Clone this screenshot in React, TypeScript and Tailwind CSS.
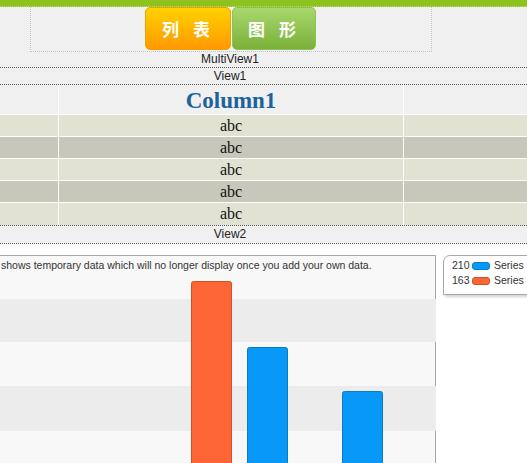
import React from "react";

const rows = ["abc", "abc", "abc", "abc", "abc"];

const Label = ({ text, h }: { text: string; h: string }) => (
  <div className={`w-[460px] text-center text-[12px] text-[#222] ${h}`}>{text}</div>
);

const Chart = () => (
  <svg width="436" height="190" className="block">
    <rect x="0" y="24" width="436" height="43" fill="#ececec" />
    <rect x="0" y="111" width="436" height="45" fill="#ececec" />
    <path d="M191.5 190 V8.5 a2 2 0 0 1 2 -2 H229.5 a2 2 0 0 1 2 2 V190" fill="#fe6535" stroke="#c9532b" />
    <path d="M247.5 190 V74.5 a2 2 0 0 1 2 -2 H285.5 a2 2 0 0 1 2 2 V190" fill="#0899f8" stroke="#0b7cc4" />
    <path d="M342.5 190 V118.5 a2 2 0 0 1 2 -2 H380.5 a2 2 0 0 1 2 2 V190" fill="#0899f8" stroke="#0b7cc4" />
  </svg>
);

const App = () => {
  return (
    <div className="w-[527px] h-[463px] overflow-hidden bg-white font-['Liberation_Sans',Arial,sans-serif]">
      <div className="bg-[#f0f0f0]">
        <div className="h-[7px] bg-[#8dc21f] border-b border-dotted border-[#b8da70]" />
        <div className="ml-[30px] w-[402px] h-[45px] border-x border-b border-dotted border-[#c4c4c4]">
          <div className="flex gap-[1px] pl-[114px]">
            <button className="w-[86px] h-[43px] flex items-center pl-[16px] rounded-[5px] border border-[#eea400] bg-gradient-to-b from-[#ffd200] to-[#ff9800] text-white text-[17px] font-bold tracking-[14px] font-['Noto_Sans_CJK_SC',sans-serif]">
              列表
            </button>
            <button className="w-[84px] h-[43px] flex items-center pl-[15px] rounded-[5px] border border-[#8fbf55] bg-gradient-to-b from-[#a8d86c] to-[#7bb13a] text-white text-[17px] font-bold tracking-[14px] font-['Noto_Sans_CJK_SC',sans-serif]">
              图形
            </button>
          </div>
        </div>
        <Label text="MultiView1" h="h-[15px] leading-[15px]" />
        <div className="border-t border-dotted border-[#555]" />
        <Label text="View1" h="h-[16px] leading-[16px]" />
        <div className="border-t border-dotted border-[#555]" />

        <div className="font-['Liberation_Serif','Times_New_Roman',serif]">
          <div className="grid grid-cols-[59px_345px_1fr] h-[30px] border-b border-white">
            <div className="border-r border-white" />
            <div className="border-r border-white text-center text-[23px] font-bold leading-[29px] pt-[1px] text-[#1d6298]">
              Column1
            </div>
            <div />
          </div>
          {rows.map((r, i) => (
            <div
              key={i}
              className={`grid grid-cols-[59px_345px_1fr] h-[22px] ${i < rows.length - 1 ? "border-b border-white" : ""} ${
                i % 2 === 0 ? "bg-[#e2e2d3]" : "bg-[#c8c7bc]"
              }`}
            >
              <div className="border-r border-white" />
              <div className="border-r border-white text-center text-[16px] leading-[21px] text-[#111]">{r}</div>
              <div />
            </div>
          ))}
        </div>
        <div className="border-t border-dotted border-[#555]" />
        <Label text="View2" h="h-[17px] leading-[17px]" />
      </div>
      <div className="border-t border-dotted border-[#555]" />

      <div className="flex items-start mt-[11px]">
        <div className="w-[436px] h-[220px] shrink-0 border-t border-r border-[#a8a8a8] bg-[#f8f8f8]">
          <div className="h-[19px] pt-[2px] pl-[1px] text-[10.5px] leading-[14px] text-[#333] whitespace-nowrap">
            shows temporary data which will no longer display once you add your own data.
          </div>
          <Chart />
        </div>
        <div className="ml-[7px] w-[100px] h-[40px] shrink-0 border border-[#a8a8a8] rounded-tl-[7px] bg-white shadow-[2px_2px_3px_rgba(0,0,0,0.18)] pl-[8px] pt-[2px] text-[10.5px] leading-[15px] text-[#333]">
          <div className="flex items-center">
            <span className="w-[20px]">210</span>
            <span className="w-[18px] h-[8px] rounded-[3px] bg-[#0899f8] border border-[#0b7cc4]" />
            <span className="ml-[4px]">Series</span>
          </div>
          <div className="flex items-center">
            <span className="w-[20px]">163</span>
            <span className="w-[18px] h-[8px] rounded-[3px] bg-[#fe6535] border border-[#c9532b]" />
            <span className="ml-[4px]">Series</span>
          </div>
        </div>
      </div>
    </div>
  );
};

export default App;
